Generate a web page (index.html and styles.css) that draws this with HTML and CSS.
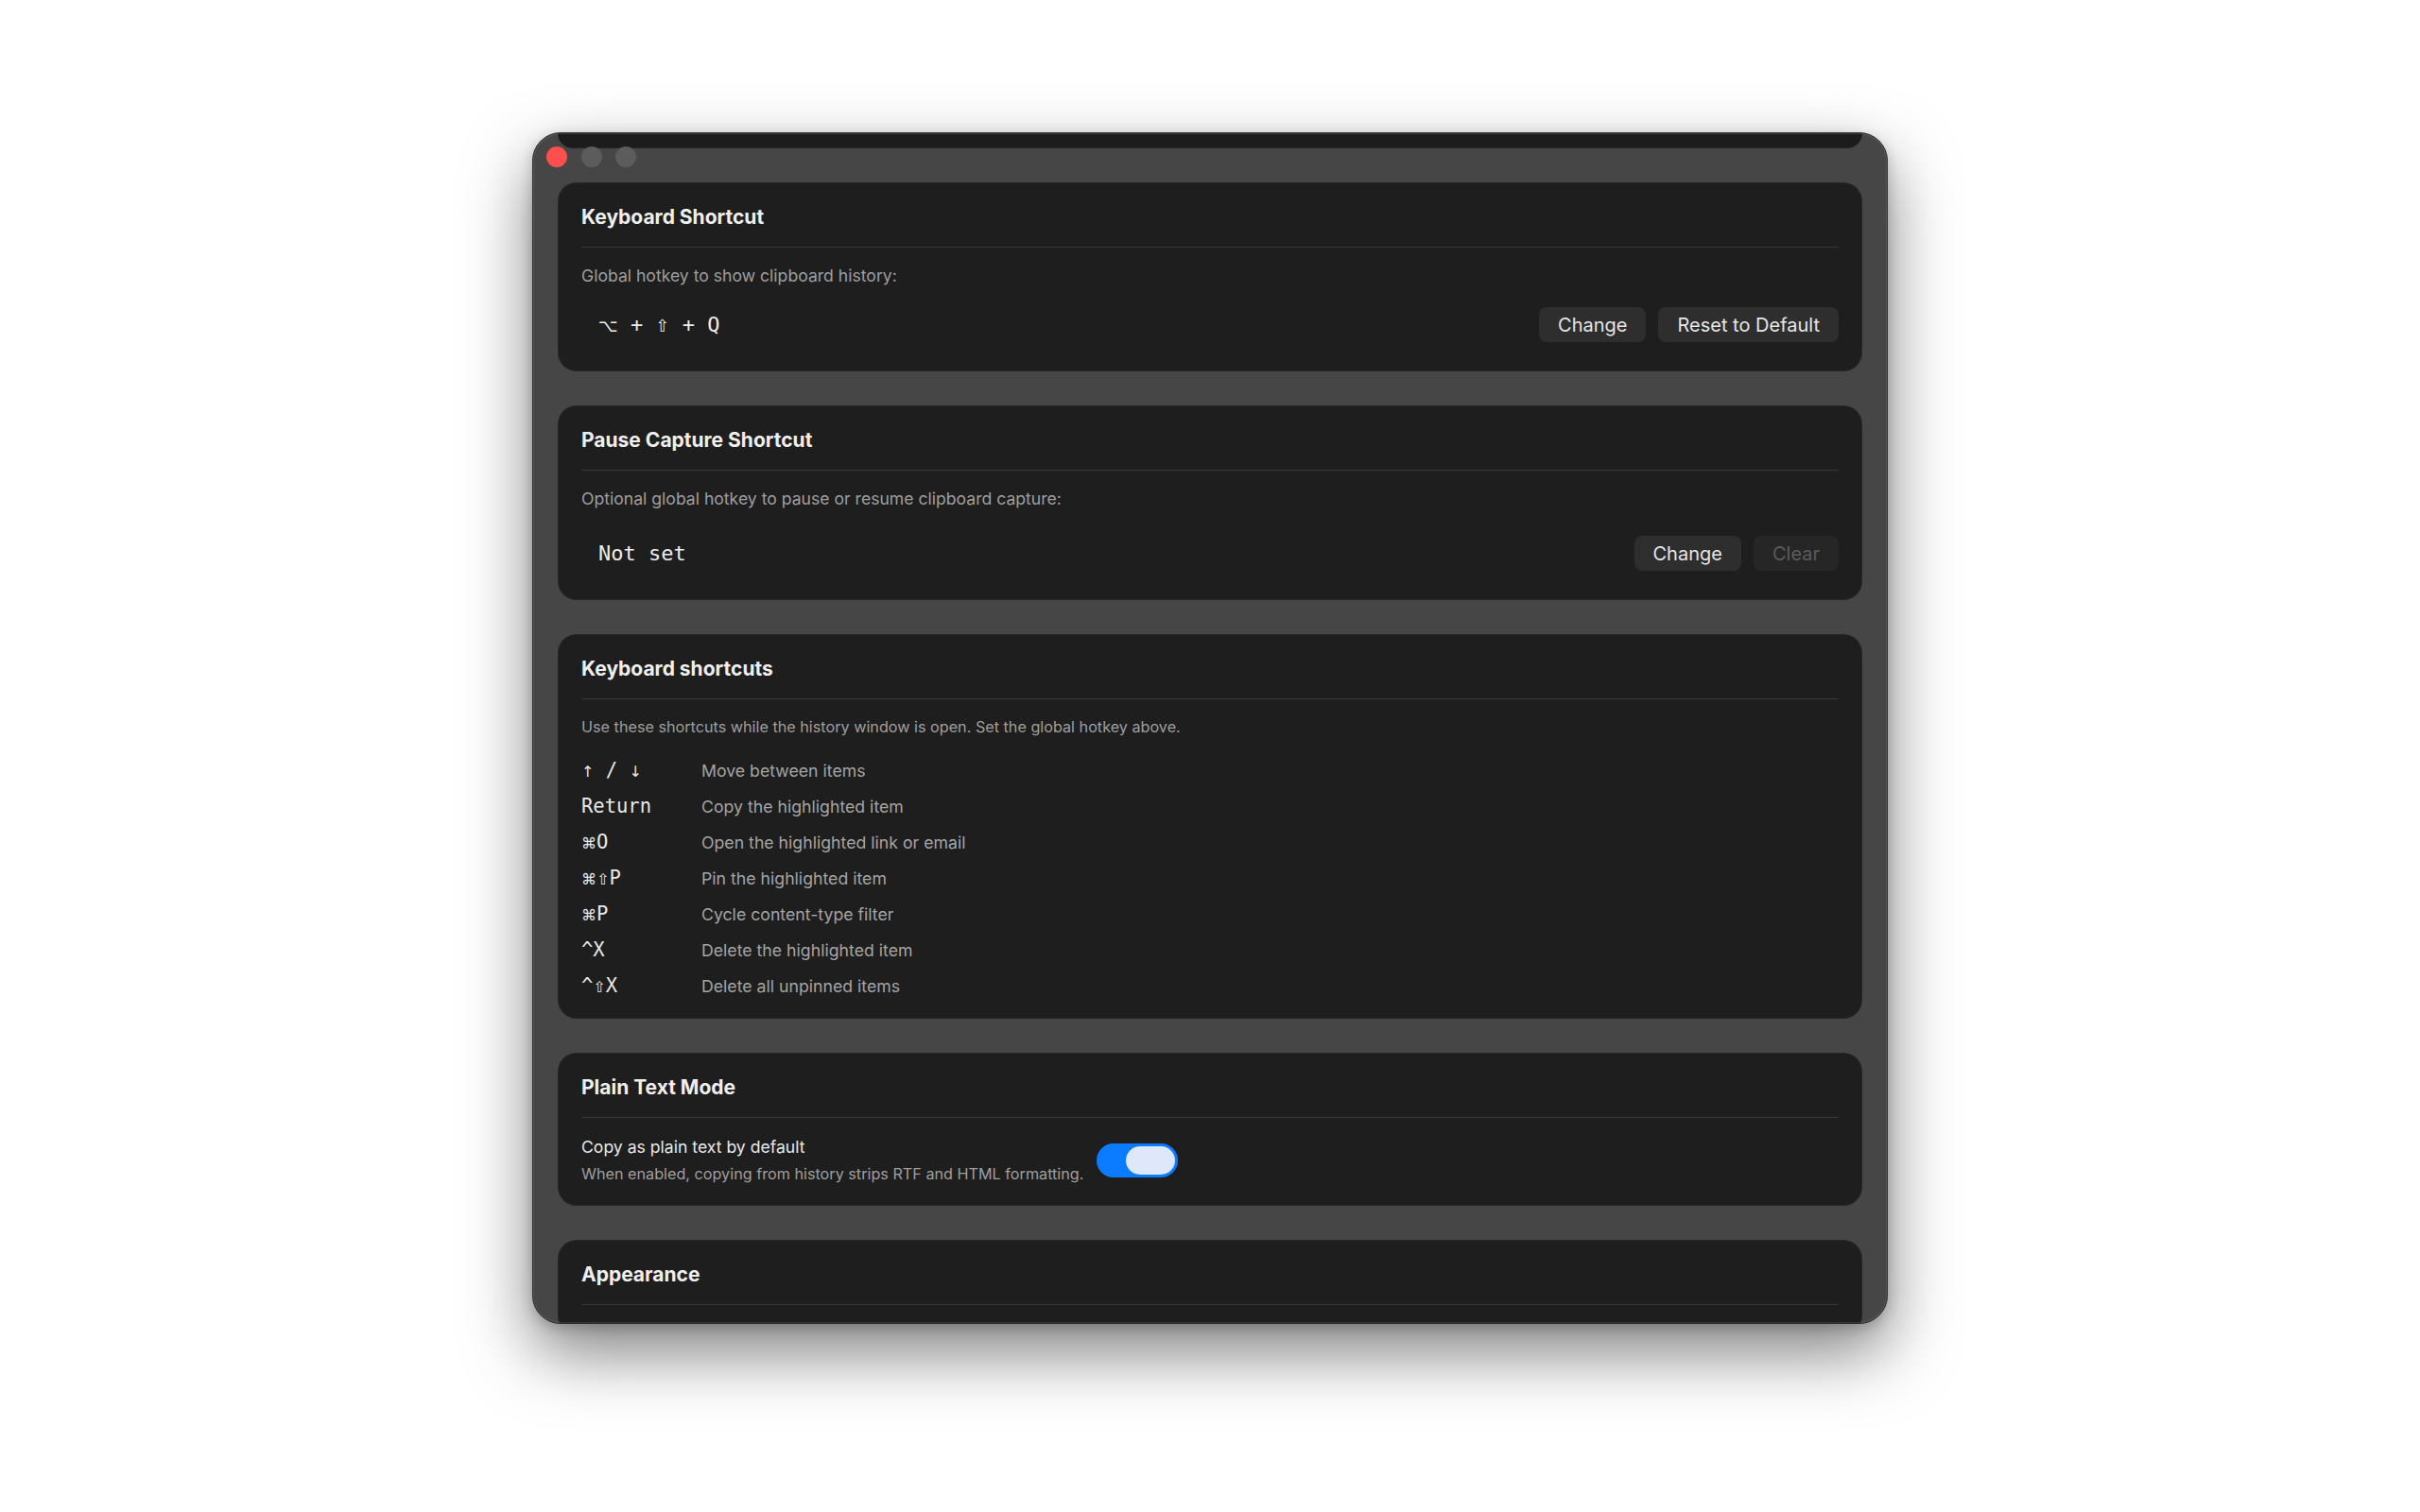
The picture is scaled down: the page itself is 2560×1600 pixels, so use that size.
FILE: index.html
```html
<!DOCTYPE html>
<html lang="en">
<head>
  <meta charset="UTF-8" />
  <meta name="viewport" content="width=device-width, initial-scale=1.0"/>
  <title>Clipboard Settings</title>
  <link rel="stylesheet" href="styles.css">
</head>
<body>

  <div class="window">
    <!-- TRAFFIC LIGHTS -->
    <div class="traffic">
      <span class="light red"></span>
      <span class="light"></span>
      <span class="light"></span>
    </div>

    <div class="content">
      <div class="card card-tail"></div>

      <!-- HOTKEY -->
      <section class="card">
        <h2 class="card-title">Keyboard Shortcut</h2>
        <p class="card-sub">Global hotkey to show clipboard history:</p>
        <div class="hotkey-row">
          <span class="hotkey"><span class="sym">⌥</span> + <span class="sym">⇧</span> + Q</span>
          <div class="btns">
            <button class="btn">Change</button>
            <button class="btn">Reset to Default</button>
          </div>
        </div>
      </section>

      <!-- PAUSE -->
      <section class="card">
        <h2 class="card-title">Pause Capture Shortcut</h2>
        <p class="card-sub">Optional global hotkey to pause or resume clipboard capture:</p>
        <div class="hotkey-row pause-row">
          <span class="hotkey">Not set</span>
          <div class="btns">
            <button class="btn">Change</button>
            <button class="btn" disabled>Clear</button>
          </div>
        </div>
      </section>

      <!-- SHORTCUT LIST -->
      <section class="card card-list">
        <h2 class="card-title">Keyboard shortcuts</h2>
        <p class="card-sub small">Use these shortcuts while the history window is open. Set the global hotkey above.</p>
        <ul class="shortcut-list">
          <li><span class="key"><span class="sym">↑</span> / <span class="sym">↓</span></span><span class="desc">Move between items</span></li>
          <li><span class="key">Return</span><span class="desc">Copy the highlighted item</span></li>
          <li><span class="key"><span class="sym">⌘</span>O</span><span class="desc">Open the highlighted link or email</span></li>
          <li><span class="key"><span class="sym">⌘⇧</span>P</span><span class="desc">Pin the highlighted item</span></li>
          <li><span class="key"><span class="sym">⌘</span>P</span><span class="desc">Cycle content-type filter</span></li>
          <li><span class="key">^X</span><span class="desc">Delete the highlighted item</span></li>
          <li><span class="key">^<span class="sym">⇧</span>X</span><span class="desc">Delete all unpinned items</span></li>
        </ul>
      </section>

      <!-- PLAIN TEXT -->
      <section class="card card-setting">
        <h2 class="card-title">Plain Text Mode</h2>
        <div class="setting">
          <div class="setting-text">
            <div class="setting-label">Copy as plain text by default</div>
            <div class="setting-desc">When enabled, copying from history strips RTF and HTML formatting.</div>
          </div>
          <div class="toggle on"><span class="knob"></span></div>
        </div>
      </section>

      <!-- APPEARANCE -->
      <section class="card">
        <h2 class="card-title">Appearance</h2>
      </section>
    </div>
  </div>

</body>
</html>
```

FILE: styles.css
```css
* {
  margin: 0;
  padding: 0;
  box-sizing: border-box;
}

body {
  font-family: Inter, 'Liberation Sans', sans-serif;
  background-color: #ffffff;
  color: #ececec;
  display: flex;
  justify-content: center;
  padding-top: 140px;
  height: 1600px;
  overflow: hidden;
}

.window {
  position: relative;
  width: 1434px;
  height: 1261px;
  background-color: #464646;
  border: 1px solid #2a2a2a;
  border-radius: 30px;
  overflow: hidden;
  box-shadow: 0 30px 70px rgba(0,0,0,0.5), 0 4px 14px rgba(0,0,0,0.2);
}

.window::after {
  content: "";
  position: absolute;
  inset: 0;
  border-radius: 29px;
  box-shadow: inset 0 0 0 1px rgba(255,255,255,0.1);
  pointer-events: none;
}

.traffic {
  position: absolute;
  top: 14px;
  left: 14px;
  display: flex;
  gap: 14.5px;
  z-index: 10;
}

.light {
  width: 22px;
  height: 22px;
  border-radius: 50%;
  background-color: #5c5c5c;
}

.light.red {
  background-color: #fe4f4f;
}

.content {
  padding: 0 26px;
  display: flex;
  flex-direction: column;
  gap: 36px;
}

.card {
  background-color: #1e1e1e;
  border-radius: 20px;
  padding: 25px 25px 31px;
  box-shadow: inset 0 0 0 1px rgba(255,255,255,0.04);
}

.card-tail {
  height: 16px;
  padding: 0;
  border-radius: 0 0 20px 20px;
  background-color: #1c1c1c;
}

.card-title {
  font-size: 21px;
  line-height: 24px;
  font-weight: 700;
  color: #efefef;
  padding-bottom: 19px;
  border-bottom: 1px solid #383838;
}

.card-sub {
  margin-top: 20px;
  font-size: 17.6px;
  line-height: 20px;
  color: #9e9e9e;
}

.card-sub.small {
  font-size: 16.2px;
  line-height: 18px;
}

.hotkey-row {
  margin-top: 23px;
  height: 37px;
  display: flex;
  justify-content: space-between;
  align-items: center;
}

.pause-row {
  margin-top: 29px;
}

.hotkey {
  font-family: 'DejaVu Sans Mono', monospace;
  font-size: 22px;
  color: #ececec;
  padding-left: 18px;
}

.sym {
  font-family: 'DejaVu Sans', sans-serif;
}

.hotkey .sym {
  font-size: 18px;
}

.btns {
  display: flex;
  gap: 13px;
}

.btn {
  height: 37px;
  padding: 0 20px;
  border: none;
  border-radius: 8px;
  background-color: #2e2e2e;
  color: #e6e6e6;
  font-family: Inter, 'Liberation Sans', sans-serif;
  font-size: 20px;
}

.btn:disabled {
  background-color: #262626;
  color: #5c5c5c;
}

.card-list {
  padding-bottom: 23px;
}

.shortcut-list {
  list-style: none;
  margin-top: 25px;
  display: flex;
  flex-direction: column;
  gap: 14px;
}

.shortcut-list li {
  display: flex;
  align-items: center;
  height: 24px;
}

.key {
  width: 127px;
  font-family: 'DejaVu Sans Mono', monospace;
  font-size: 20.5px;
  color: #e8e8e8;
}

.key .sym {
  font-size: 16px;
}

.desc {
  font-size: 17.7px;
  color: #a4a4a4;
}

.card-setting {
  padding-bottom: 24px;
}

.setting {
  margin-top: 20px;
  display: flex;
  align-items: center;
  gap: 14px;
}

.setting-label {
  font-size: 17.6px;
  line-height: 22px;
  color: #e8e8e8;
}

.setting-desc {
  margin-top: 7px;
  font-size: 16.2px;
  line-height: 20px;
  color: #9e9e9e;
}

.toggle {
  width: 86px;
  height: 36px;
  border-radius: 18px;
  background-color: #0b7bff;
  padding: 3px;
  display: flex;
  justify-content: flex-end;
}

.knob {
  width: 52px;
  height: 30px;
  border-radius: 15px;
  background-color: #dfe8fb;
}
```
